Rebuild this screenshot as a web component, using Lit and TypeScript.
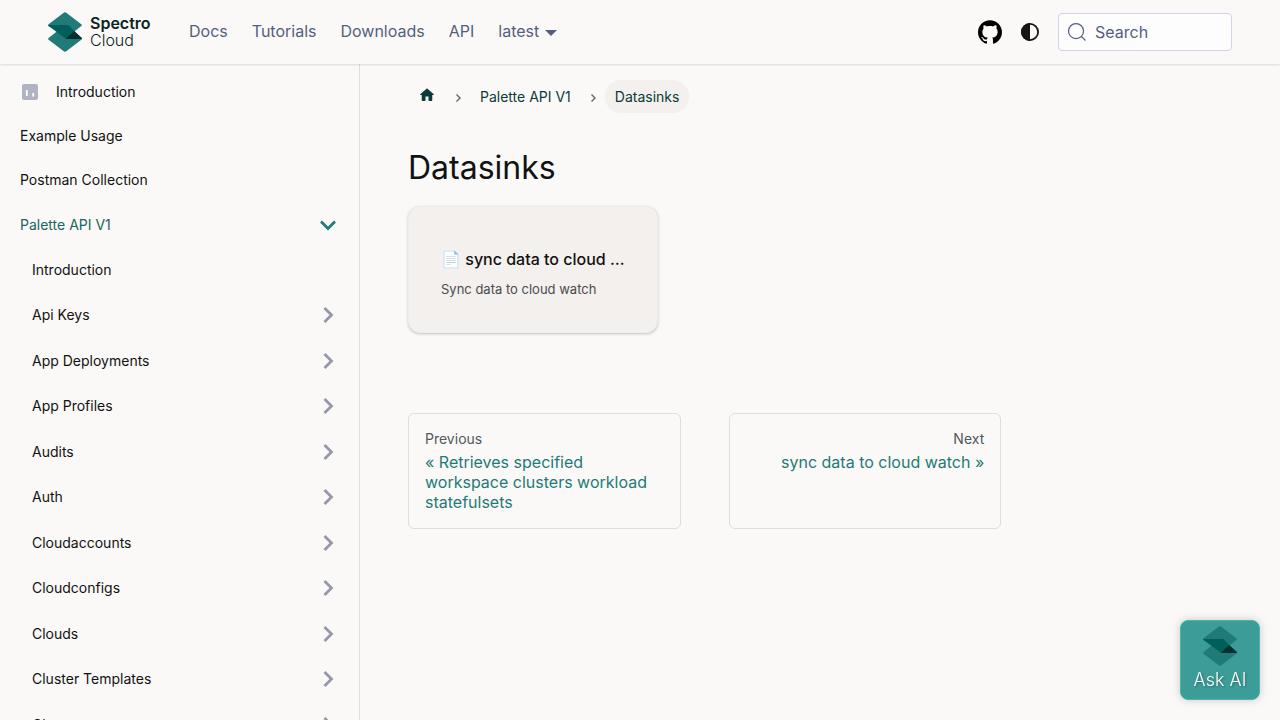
import { LitElement, html, css, svg } from "lit";
import { customElement } from "lit/decorators.js";
import { classMap } from "lit/directives/class-map.js";

interface NavItem {
  label: string;
  kind: "leaf" | "category";
  nested?: boolean;
  open?: boolean;
  icon?: boolean;
}

const NAV_LINKS = ["Docs", "Tutorials", "Downloads", "API"];

const category = (label: string): NavItem => ({ label, kind: "category", nested: true });

const SIDEBAR: NavItem[] = [
  { label: "Introduction", kind: "leaf", icon: true },
  { label: "Example Usage", kind: "leaf" },
  { label: "Postman Collection", kind: "leaf" },
  { label: "Palette API V1", kind: "category", open: true },
  { label: "Introduction", kind: "leaf", nested: true },
  ...[
    "Api Keys",
    "App Deployments",
    "App Profiles",
    "Audits",
    "Auth",
    "Cloudaccounts",
    "Cloudconfigs",
    "Clouds",
    "Cluster Templates",
    "Clusters",
  ].map(category),
];

const logoMark = svg`
  <path d="M15.4 .9Q17 -.4 18.600 .9L33.300 12.200Q34.400 13.100 33.300 14L20.500 24.200 .6 14Q-.4 13.100 .6 12.200Z" fill="#1f7a78"/>
  <path d="M13.500 15.800L33.300 26Q34.400 26.900 33.300 27.800L18.600 39.100Q17 40.400 15.400 39.100L.6 27.800Q-.4 26.900 .6 26Z" fill="#1f7a78"/>
  <path d="M0 13.100H20.300L34 26.900H19.200Q17.900 26.900 16.900 26.100L.6 14Z" fill="#005e5b"/>
  <path d="M26.100 19L33.700 25.800Q34.400 26.900 33 26.900H17.600Z" fill="#04302f"/>`;

@customElement("app-root")
export class AppRoot extends LitElement {
  static styles = css`
    :host {
      display: block;
      min-height: 100vh;
      background: #faf9f7;
      color: #121212;
      font: 400 16px/24px Inter, "Open Sans", sans-serif;
    }
    * {
      box-sizing: border-box;
    }
    a {
      color: inherit;
      text-decoration: none;
    }
    button {
      font: inherit;
      color: inherit;
      background: none;
      border: 0;
      padding: 0;
      cursor: pointer;
    }
    svg {
      display: block;
      flex: none;
    }
    ul {
      list-style: none;
      margin: 0;
      padding: 0;
    }
    .navbar {
      position: sticky;
      top: 0;
      z-index: 2;
      height: 64px;
      padding: 0 48px;
      display: flex;
      align-items: center;
      justify-content: space-between;
      background: #faf9f7;
      box-shadow: 0 1px 2px rgba(0, 0, 0, 0.12);
    }
    .group {
      display: flex;
      align-items: center;
    }
    .brand {
      display: flex;
      align-items: center;
      gap: 8px;
      margin-right: 24px;
      color: #0b2423;
      font-size: 16px;
      line-height: 17px;
    }
    .brand-name {
      display: grid;
      width: 63px;
    }
    .brand-top {
      font-weight: 600;
    }
    .brand-bottom {
      font-weight: 300;
    }
    .nav-link {
      display: flex;
      align-items: center;
      gap: 6px;
      padding: 0 12px 2px;
      color: #545f7e;
    }
    .caret {
      margin-top: 3px;
      border: 6px solid transparent;
      border-top-color: currentColor;
      border-bottom: 0;
    }
    .tools {
      gap: 16px;
    }
    .search {
      display: flex;
      align-items: center;
      gap: 8px;
      width: 174px;
      height: 38px;
      padding: 0 8px;
      border: 1px solid #d3d3e6;
      border-radius: 4px;
      background: #fdfdfd;
      color: #545f7e;
    }
    .search input {
      flex: 1;
      min-width: 0;
      border: 0;
      outline: 0;
      padding: 0;
      background: none;
      font: inherit;
      color: inherit;
    }
    .search input::placeholder {
      color: #545f7e;
      opacity: 1;
    }
    .layout {
      display: grid;
      grid-template-columns: 360px minmax(0, 1fr);
    }
    .sidebar {
      position: sticky;
      top: 64px;
      height: calc(100vh - 64px);
      overflow: hidden;
      padding: 6px 19px 6px 20px;
      border-right: 1px solid #dadde1;
      font-size: 14px;
      line-height: 20px;
    }
    .row {
      display: flex;
      align-items: center;
      height: 44px;
    }
    .row.category {
      height: 45px;
    }
    .row.category:nth-child(even) {
      height: 46px;
    }
    .row.nested {
      padding-left: 12px;
    }
    .row.open {
      color: #1b6462;
    }
    .row a {
      flex: 1;
    }
    .row-icon {
      margin-right: 16px;
    }
    .row button {
      color: #9697ad;
    }
    .row.open button {
      color: #1f7a78;
      transform: rotate(90deg);
    }
    main {
      padding: 16px 48px;
    }
    .article {
      width: 72%;
    }
    .crumbs {
      display: flex;
      align-items: center;
      margin-bottom: 32px;
      font-size: 14px;
      line-height: 21px;
      color: #0b3b3a;
    }
    .crumbs li {
      display: flex;
      align-items: center;
    }
    .crumbs a {
      padding: 6px 10px;
      border-radius: 16px;
    }
    .crumbs .home {
      padding-bottom: 9px;
    }
    .crumbs .current {
      background: #f3f0ed;
    }
    .crumbs .sep {
      margin: 0 4px;
      color: #606770;
    }
    h1 {
      margin: 0 0 16px;
      font-size: 32px;
      line-height: 45px;
      font-weight: 400;
    }
    .cards {
      display: grid;
      grid-template-columns: repeat(auto-fill, 250px);
      gap: 32px;
      margin-bottom: 80px;
    }
    .card {
      padding: 40px 32px 32px;
      border: 1px solid #ebedf0;
      border-radius: 12px;
      background: #f3f0ed;
      box-shadow: 0 1px 3px rgba(0, 0, 0, 0.22);
    }
    .card h2 {
      margin: 0 0 8px;
      font-size: 16px;
      line-height: 24px;
      font-weight: 500;
      white-space: nowrap;
      overflow: hidden;
      text-overflow: ellipsis;
    }
    .card p {
      margin: 0;
      font-size: 13px;
      line-height: 21px;
      color: #4b4b4f;
    }
    .pager {
      display: grid;
      grid-template-columns: 1fr 1fr;
      gap: 48px;
    }
    .pager a {
      padding: 15px 16px 16px;
      border: 1px solid #dadde1;
      border-radius: 6px;
      color: #1f7a78;
      line-height: 20px;
    }
    .pager .next {
      text-align: right;
    }
    .pager small {
      display: block;
      margin-bottom: 3px;
      font-size: 14px;
      color: #525860;
    }
    .ask {
      position: fixed;
      right: 20px;
      bottom: 20px;
      width: 80px;
      height: 80px;
      display: flex;
      flex-direction: column;
      align-items: center;
      justify-content: center;
      gap: 2px;
      padding-bottom: 2px;
      border: 1px solid #4db6ac;
      border-radius: 8px;
      background: #3c9c98;
      box-shadow: 0 0 8px rgba(0, 0, 0, 0.2);
      color: #fff;
      font-size: 18px;
      font-weight: 300;
      text-shadow: 1px 1px 2px rgba(0, 0, 0, 0.3);
    }
  `;

  private renderRow(item: NavItem) {
    const classes = {
      row: true,
      category: item.kind === "category",
      nested: !!item.nested,
      open: !!item.open,
    };
    return html`<li class=${classMap(classes)}>
      ${item.icon
        ? html`<svg class="row-icon" width="20" height="20" viewBox="0 0 20 20">
            <rect x="2" y="2" width="16" height="16" rx="2" fill="#b0b3c1" />
            <path d="M6.800 8v6M13.200 11v3.500" stroke="#fff" stroke-width="1.800" />
          </svg>`
        : ""}
      <a href="#">${item.label}</a>
      ${item.kind === "category"
        ? html`<button aria-label="Toggle ${item.label}">
            <svg width="24" height="24" viewBox="0 0 24 24">
              <path d="M8.500 5L15.500 12 8.500 19" fill="none" stroke="currentColor" stroke-width="2.800" />
            </svg>
          </button>`
        : ""}
    </li>`;
  }

  private renderSeparator() {
    return html`<svg class="sep" width="16" height="16" viewBox="0 0 16 16" aria-hidden="true">
      <path d="M6.500 5.500L10 9 6.500 12.500" fill="none" stroke="currentColor" stroke-width="1.400" />
    </svg>`;
  }

  render() {
    return html`
      <nav class="navbar">
        <div class="group">
          <a class="brand" href="#">
            <svg width="34" height="40" viewBox="0 0 34 40">${logoMark}</svg>
            <span class="brand-name">
              <span class="brand-top">Spectro</span>
              <span class="brand-bottom">Cloud</span>
            </span>
          </a>
          ${NAV_LINKS.map((label) => html`<a class="nav-link" href="#">${label}</a>`)}
          <button class="nav-link">latest<span class="caret"></span></button>
        </div>
        <div class="group tools">
          <a href="#" aria-label="GitHub">
            <svg width="24" height="24" viewBox="0 0 24 24">
              <path d="M12 .297c-6.630 0-12 5.373-12 12 0 5.303 3.438 9.800 8.205 11.385.6.113.82-.258.82-.577 0-.285-.01-1.040-.015-2.040-3.338.724-4.042-1.610-4.042-1.610C4.422 18.070 3.633 17.700 3.633 17.700c-1.087-.744.084-.729.084-.729 1.205.084 1.838 1.236 1.838 1.236 1.070 1.835 2.809 1.305 3.495.998.108-.776.417-1.305.76-1.605-2.665-.3-5.466-1.332-5.466-5.930 0-1.310.465-2.380 1.235-3.220-.135-.303-.54-1.523.105-3.176 0 0 1.005-.322 3.300 1.230.96-.267 1.980-.399 3-.405 1.020.006 2.040.138 3 .405 2.280-1.552 3.285-1.230 3.285-1.230.645 1.653.24 2.873.12 3.176.765.84 1.230 1.910 1.230 3.220 0 4.610-2.805 5.625-5.475 5.920.42.36.81 1.096.81 2.220 0 1.606-.015 2.896-.015 3.286 0 .315.21.690.825.570C20.565 22.092 24 17.592 24 12.297c0-6.627-5.373-12-12-12" />
            </svg>
          </a>
          <button aria-label="Switch between dark and light mode">
            <svg width="24" height="24" viewBox="0 0 24 24">
              <circle cx="12" cy="12" r="8.100" fill="none" stroke="#161616" stroke-width="1.800" />
              <path d="M12 3a9 9 0 0 0 0 18z" fill="#161616" />
            </svg>
          </button>
          <label class="search">
            <svg width="20" height="20" viewBox="0 0 20 20" aria-hidden="true">
              <path d="M14.386 14.386l4.088 4.088-4.088-4.088A7.533 7.533 0 1 1 3.733 3.733a7.533 7.533 0 0 1 10.653 10.653z" fill="none" stroke="currentColor" stroke-width="1.200" />
            </svg>
            <input type="text" placeholder="Search" aria-label="Search" />
          </label>
        </div>
      </nav>
      <div class="layout">
        <aside class="sidebar">
          <ul>
            ${SIDEBAR.map((item) => this.renderRow(item))}
          </ul>
        </aside>
        <main>
          <div class="article">
            <ul class="crumbs">
              <li>
                <a class="home" href="#" aria-label="Home page">
                  <svg width="18" height="18" viewBox="0 0 24 24">
                    <path d="M10 19v-5h4v5c0 .550.450 1 1 1h3c.550 0 1-.450 1-1v-7h1.700c.460 0 .680-.570.330-.870L12.670 3.600c-.380-.340-.960-.340-1.340 0l-8.360 7.530c-.340.300-.130.870.330.870H5v7c0 .550.450 1 1 1h3c.550 0 1-.450 1-1z" fill="currentColor" />
                  </svg>
                </a>
                ${this.renderSeparator()}
              </li>
              <li><a href="#">Palette API V1</a>${this.renderSeparator()}</li>
              <li><a class="current" href="#">Datasinks</a></li>
            </ul>
            <h1>Datasinks</h1>
            <div class="cards">
              <a class="card" href="#">
                <h2>📄 sync data to cloud watch</h2>
                <p>Sync data to cloud watch</p>
              </a>
            </div>
            <nav class="pager">
              <a class="prev" href="#">
                <small>Previous</small>
                « Retrieves specified workspace clusters workload statefulsets
              </a>
              <a class="next" href="#">
                <small>Next</small>
                sync data to cloud watch »
              </a>
            </nav>
          </div>
        </main>
      </div>
      <button class="ask">
        <svg width="34" height="40" viewBox="0 0 34 40">${logoMark}</svg>
        Ask AI
      </button>
    `;
  }
}
